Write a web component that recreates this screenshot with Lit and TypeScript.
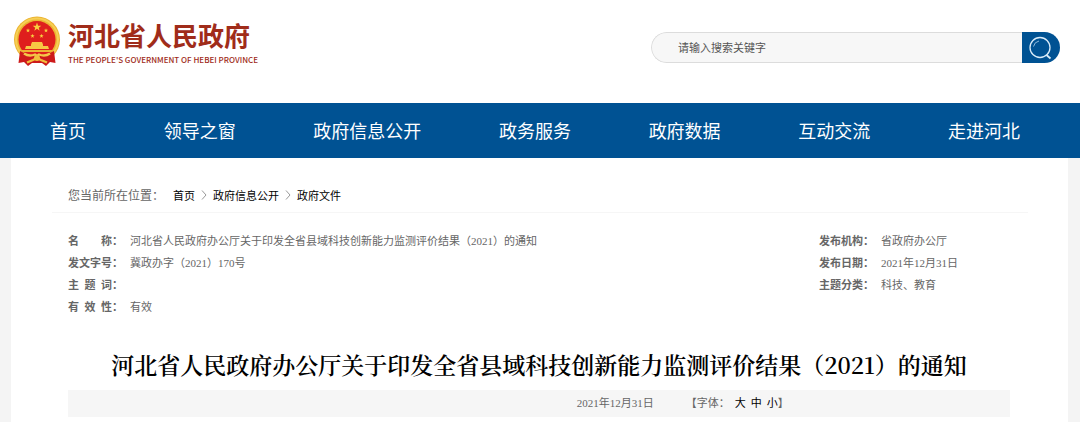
import { LitElement, html, css, svg } from "lit";
import { customElement } from "lit/decorators.js";

const NAV = ["首页", "领导之窗", "政府信息公开", "政务服务", "政府数据", "互动交流", "走进河北"];
const TITLE = "河北省人民政府办公厅关于印发全省县域科技创新能力监测评价结果（2021）的通知";

const META_LEFT = [
  ["名 称", TITLE],
  ["发文字号", "冀政办字（2021）170号"],
  ["主 题 词", ""],
  ["有 效 性", "有效"],
];
const META_RIGHT = [
  ["发布机构", "省政府办公厅"],
  ["发布日期", "2021年12月31日"],
  ["主题分类", "科技、教育"],
];

const star = (x: number, y: number, s: number) => svg`
  <path transform="translate(${x} ${y}) scale(${s})" fill="#f9cf3f"
    d="M0-4 1-1.2 3.9-1.2 1.6.6 2.4 3.4 0 1.7-2.4 3.4-1.6.6-3.9-1.2-1-1.2Z"/>`;

@customElement("site-emblem")
export class SiteEmblem extends LitElement {
  static styles = css`
    :host { display: block; width: 48px; height: 51px; }
    .art { display: block; width: 100%; height: 100%; }
  `;
  render() {
    return html`<svg class="art" viewBox="0 0 48 51" aria-hidden="true">
      <circle cx="24" cy="23.500" r="23" fill="#ecb432"/>
      <circle cx="24" cy="23.500" r="21" fill="none" stroke="#f6cf55" stroke-width="2"/>
      <circle cx="24" cy="23.500" r="18.500" fill="#df1f1d"/>
      ${star(24, 11, 1.1)} ${star(15, 14.5, 0.55)} ${star(33, 14.5, 0.55)}
      ${star(19.5, 20, 0.55)} ${star(28.500, 20, 0.55)}
      <path d="M19 26H29L30 28.500H18ZM18 28.500H30V30H35L36 33H12L13 30H18Z" fill="#f7c844"/>
      <path d="M8 34H40L38 36H10Z" fill="#eeb332"/>
      <path d="M7 35 13 38H35L41 35 42.500 47 37 46 33 50 29 47H19L15 50 11 46 5.500 47Z" fill="#cd1a1b"/>
      <path d="M11 37.500Q16 41 22 38.500L24 40 26 38.500Q32 41 37 37.500" fill="none" stroke="#f5c74a" stroke-width="2.400"/>
      <path d="M14 46.500 20 44 24 42 28 44 34 46.500" fill="none" stroke="#f2be3e" stroke-width="2.400"/>
      <circle cx="24" cy="42" r="3" fill="#f2be3e"/>
    </svg>`;
  }
}

@customElement("app-root")
export class AppRoot extends LitElement {
  static styles = css`
    :host {
      display: block;
      min-height: 100vh;
      background: #f4f4f4;
      color: #666;
      font: 11px/22px "Noto Sans CJK SC", sans-serif;
    }
    a { color: inherit; text-decoration: none; }
    .header {
      display: flex;
      align-items: flex-start;
      justify-content: space-between;
      box-sizing: border-box;
      height: 103px;
      padding: 16px 20px 0 13px;
      background: #fff;
    }
    .brand { display: flex; gap: 7px; color: #a02c1a; }
    .brand-text { display: flex; flex-direction: column; }
    .brand-name { font-size: 26px; line-height: 38px; font-weight: 700; }
    .brand-en { font-size: 8px; line-height: 12px; font-weight: 500; white-space: nowrap; }
    .search {
      display: flex;
      width: 409px;
      height: 31px;
      margin-top: 16px;
      border-radius: 16px;
      overflow: hidden;
    }
    .search-input {
      flex: 1;
      min-width: 0;
      box-sizing: border-box;
      border: 1px solid #dcdcdc;
      border-right: 0;
      border-radius: 16px 0 0 16px;
      padding: 0 0 2px 26px;
      background: #f7f7f7;
      color: #555;
      font: inherit;
      outline: 0;
    }
    .search-input::placeholder { color: #555; opacity: 1; }
    .search-button {
      width: 38px;
      padding: 0 0 0 6px;
      border: 0;
      background: #005293;
      cursor: pointer;
    }
    .search-icon { display: block; width: 24px; height: 24px; }
    .nav {
      display: flex;
      justify-content: space-between;
      padding: 0 60px 0 50px;
      background: #005293;
      color: #fff;
      font-size: 18px;
      line-height: 55px;
    }
    .page {
      min-height: calc(100vh - 158px);
      box-sizing: border-box;
      margin: 0 12px 0 11px;
      padding: 0 40px 5px 41px;
      background: #fff;
    }
    .crumbs {
      display: flex;
      align-items: center;
      height: 55px;
      padding: 20px 16px 0;
      box-sizing: border-box;
      border-bottom: 1px solid #f6f6f6;
      color: #000;
    }
    .crumbs-label { width: 105px; font-size: 12px; color: #666; }
    .chevron { width: 6px; height: 10px; margin: 0 6px; }
    .article { padding: 16px 18px 0 16px; }
    .meta { display: grid; grid-template-columns: 1fr 191px; }
    .meta-list { margin: 0; }
    .meta-row { display: flex; height: 22px; align-items: baseline; }
    .meta-label { display: flex; width: 62px; font-weight: 700; }
    .meta-key { width: 44px; text-align-last: justify; }
    .meta-value { margin: 0; white-space: nowrap; }
    .meta-value, .info { font-family: "Liberation Serif", "Noto Sans CJK SC", sans-serif; }
    .title {
      margin: 32px 0 9px;
      text-align: center;
      color: #000;
      font: 600 23px/32px "Noto Serif CJK SC", "Noto Sans CJK SC", serif;
    }
    .info {
      display: flex;
      height: 27px;
      line-height: 27px;
      padding-left: 54%;
      background: #f6f6f6;
      white-space: nowrap;
    }
    .sizes { display: flex; margin-left: 32px; }
    .size {
      padding: 0;
      border: 0;
      margin-left: 5px;
      background: none;
      color: #000;
      font: inherit;
      cursor: pointer;
    }
  `;

  private row([key, value]: string[]) {
    return html`<div class="meta-row">
      <dt class="meta-label"><span class="meta-key">${key}</span>：</dt>
      <dd class="meta-value">${value}</dd>
    </div>`;
  }

  private chevron() {
    return html`<svg class="chevron" viewBox="0 0 6 10" aria-hidden="true">
      <path d="M1 .5 5 5 1 9.500" fill="none" stroke="#999" stroke-width="1"/>
    </svg>`;
  }

  render() {
    return html`
      <header class="header">
        <a class="brand" href="#">
          <site-emblem></site-emblem>
          <span class="brand-text">
            <span class="brand-name">河北省人民政府</span>
            <span class="brand-en">THE PEOPLE'S GOVERNMENT OF HEBEI PROVINCE</span>
          </span>
        </a>
        <form class="search" role="search" @submit=${(e: Event) => e.preventDefault()}>
          <input class="search-input" type="text" aria-label="搜索" placeholder="请输入搜索关键字" />
          <button class="search-button" aria-label="搜索">
            <svg class="search-icon" viewBox="0 0 24 24" fill="none" stroke="#d9ebf8" aria-hidden="true">
              <circle cx="12" cy="11.500" r="10" stroke-width="1.300"/>
              <path d="M5.500 10.500A7 7 0 0 1 11 5" stroke="#8fb9dc"/>
              <path d="M18.500 19 22.500 22.500" stroke-width="1.800"/>
            </svg>
          </button>
        </form>
      </header>
      <nav class="nav">${NAV.map((n) => html`<a href="#">${n}</a>`)}</nav>
      <main class="page">
        <div class="crumbs">
          <span class="crumbs-label">您当前所在位置：</span>
          <a href="#">首页</a>${this.chevron()}<a href="#">政府信息公开</a>${this.chevron()}<a href="#">政府文件</a>
        </div>
        <article class="article">
          <div class="meta">
            <dl class="meta-list">${META_LEFT.map((r) => this.row(r))}</dl>
            <dl class="meta-list">${META_RIGHT.map((r) => this.row(r))}</dl>
          </div>
          <h1 class="title">${TITLE}</h1>
          <div class="info">
            <time datetime="2021-12-31">2021年12月31日</time>
            <div class="sizes">
              <span>【字体：</span>
              <button class="size">大</button><button class="size">中</button><button class="size">小</button>
              <span>】</span>
            </div>
          </div>
        </article>
      </main>
    `;
  }
}
